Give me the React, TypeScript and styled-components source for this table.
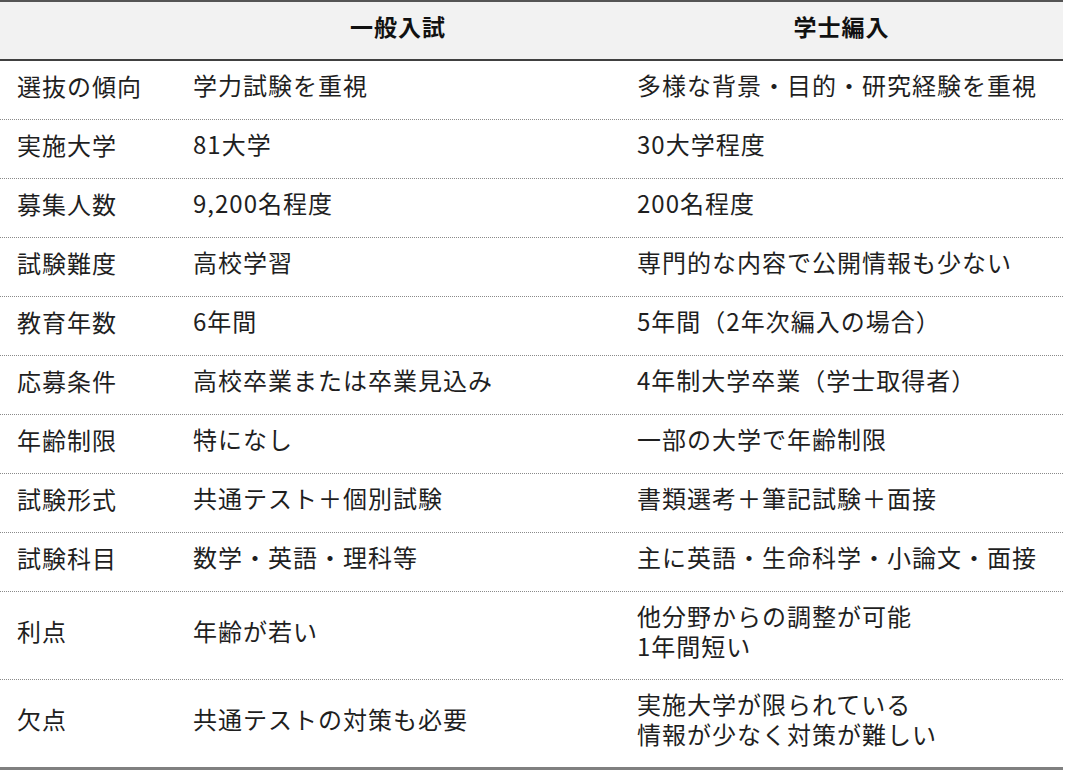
import React from 'react';
import styled, { createGlobalStyle } from 'styled-components';

const GlobalStyle = createGlobalStyle`
  html, body {
    margin: 0;
    padding: 0;
    background: #ffffff;
  }
  body {
    font-family: 'Noto Sans CJK JP', 'Noto Sans', sans-serif;
    color: #1a1a1a;
  }
`;

type RowData = {
  label: string;
  general: string[];
  transfer: string[];
};

const rows: RowData[] = [
  { label: '選抜の傾向', general: ['学力試験を重視'], transfer: ['多様な背景・目的・研究経験を重視'] },
  { label: '実施大学', general: ['81大学'], transfer: ['30大学程度'] },
  { label: '募集人数', general: ['9,200名程度'], transfer: ['200名程度'] },
  { label: '試験難度', general: ['高校学習'], transfer: ['専門的な内容で公開情報も少ない'] },
  { label: '教育年数', general: ['6年間'], transfer: ['5年間（2年次編入の場合）'] },
  { label: '応募条件', general: ['高校卒業または卒業見込み'], transfer: ['4年制大学卒業（学士取得者）'] },
  { label: '年齢制限', general: ['特になし'], transfer: ['一部の大学で年齢制限'] },
  { label: '試験形式', general: ['共通テスト＋個別試験'], transfer: ['書類選考＋筆記試験＋面接'] },
  { label: '試験科目', general: ['数学・英語・理科等'], transfer: ['主に英語・生命科学・小論文・面接'] },
  { label: '利点', general: ['年齢が若い'], transfer: ['他分野からの調整が可能', '1年間短い'] },
  { label: '欠点', general: ['共通テストの対策も必要'], transfer: ['実施大学が限られている', '情報が少なく対策が難しい'] },
];

export default function App() {
  return (
    <>
      <GlobalStyle />
      <Table>
        <HeaderRow>
          <HeaderCell />
          <HeaderCell>一般入試</HeaderCell>
          <HeaderCell>学士編入</HeaderCell>
        </HeaderRow>
        {rows.map((row, i) => (
          <Row key={row.label} $tall={row.transfer.length > 1} $last={i === rows.length - 1}>
            <Cell>{row.label}</Cell>
            <Cell>
              {row.general.map((line) => (
                <Line key={line}>{line}</Line>
              ))}
            </Cell>
            <Cell>
              {row.transfer.map((line) => (
                <Line key={line}>{line}</Line>
              ))}
            </Cell>
          </Row>
        ))}
      </Table>
    </>
  );
}

const Table = styled.div`
  width: 1063px;
  display: flex;
  flex-direction: column;
  border-top: 2px solid #555555;
  border-bottom: 3px solid #808080;
`;

const HeaderRow = styled.div`
  display: grid;
  grid-template-columns: 176px 444px 1fr;
  height: 57px;
  background: #f2f2f2;
  border-bottom: 2px solid #404040;
`;

const HeaderCell = styled.div`
  display: flex;
  align-items: center;
  justify-content: center;
  font-size: 23px;
  font-weight: 700;
  letter-spacing: 1px;
  color: #111111;
  padding-bottom: 9px;
`;

const Row = styled.div<{ $tall?: boolean; $last?: boolean }>`
  display: grid;
  grid-template-columns: 176px 444px 1fr;
  height: ${(p) => (p.$tall ? 87 : 58)}px;
  border-bottom: ${(p) => (p.$last ? 'none' : '1px dotted #8a8a8a')};
  box-sizing: content-box;
`;

const Cell = styled.div`
  display: flex;
  flex-direction: column;
  justify-content: center;
  padding: 0 0 10px 17px;
  font-size: 24px;
  letter-spacing: 1px;
  color: #1f1f1f;
`;

const Line = styled.div`
  line-height: 30px;
  white-space: nowrap;
`;
